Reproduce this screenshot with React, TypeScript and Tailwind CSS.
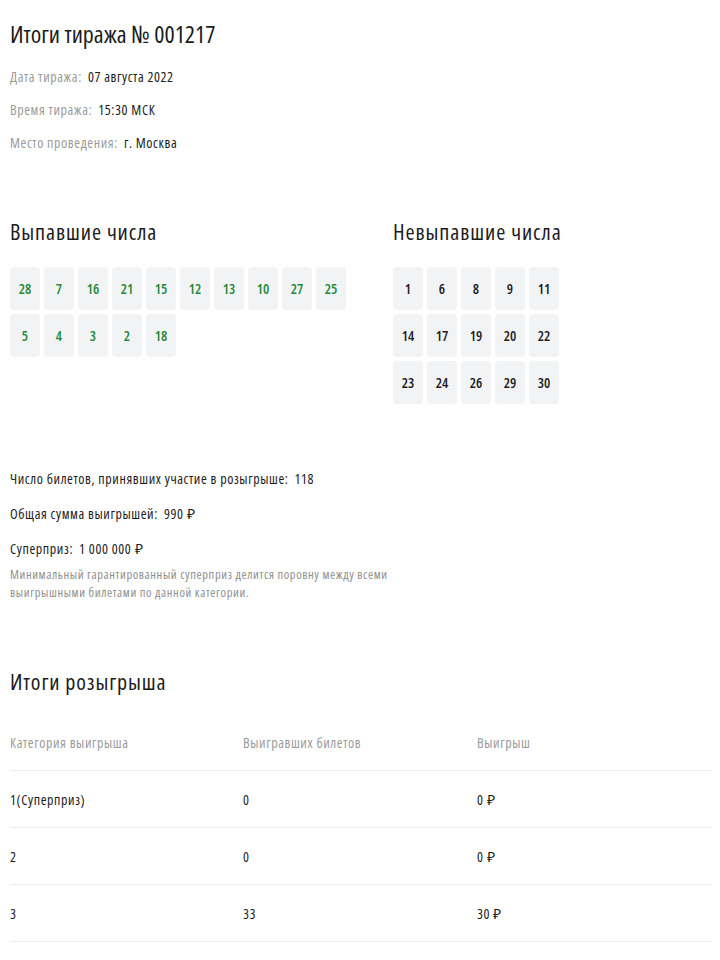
const drawn = [28, 7, 16, 21, 15, 12, 13, 10, 27, 25, 5, 4, 3, 2, 18];
const missed = [1, 6, 8, 9, 11, 14, 17, 19, 20, 22, 23, 24, 26, 29, 30];

const info = [
  { label: "Дата тиража:", value: "07 августа 2022" },
  { label: "Время тиража:", value: "15:30 МСК" },
  { label: "Место проведения:", value: "г. Москва" },
];

const rows = [
  { cat: "1(Суперприз)", count: "0", prize: "0 ₽" },
  { cat: "2", count: "0", prize: "0 ₽" },
  { cat: "3", count: "33", prize: "30 ₽" },
];

function Tile({ n, green }: { n: number; green?: boolean }) {
  return (
    <div
      className={`flex h-[43px] w-[30px] items-center justify-center rounded-[4px] bg-[#f2f3f5] text-[14px] font-semibold tracking-normal ${
        green ? "text-[#23893a]" : "text-[#1c1c1c]"
      }`}
    >
      {n}
    </div>
  );
}

export default function App() {
  return (
    <div className="min-h-screen bg-white pl-[10px] pr-[8px] font-['Open_Sans',sans-serif] text-[#1c1c1c] [font-stretch:75%]">
      <h1 className="pt-[18px] text-[24px] leading-[32px] font-normal">Итоги тиража № 001217</h1>

      <div className="mt-[17px] flex flex-col gap-[13px] text-[14px] leading-[20px] tracking-[0.6px]">
        {info.map((i) => (
          <div key={i.label}>
            <span className="text-[#9b9b9b]">{i.label}</span>
            <span className="ml-[6px]">{i.value}</span>
          </div>
        ))}
      </div>

      <div className="mt-[64px] flex">
        <div className="w-[383px]">
          <h2 className="text-[22px] leading-[28px] font-normal tracking-[0.9px]">Выпавшие числа</h2>
          <div className="mt-[22px] grid grid-cols-[repeat(10,30px)] gap-[4px]">
            {drawn.map((n) => (
              <Tile key={n} n={n} green />
            ))}
          </div>
        </div>
        <div>
          <h2 className="text-[22px] leading-[28px] font-normal tracking-[0.9px]">Невыпавшие числа</h2>
          <div className="mt-[22px] grid grid-cols-[repeat(5,30px)] gap-[4px]">
            {missed.map((n) => (
              <Tile key={n} n={n} />
            ))}
          </div>
        </div>
      </div>

      <div className="mt-[65px] flex flex-col gap-[15px] text-[14px] leading-[20px] tracking-[0.6px]">
        <div>
          Число билетов, принявших участие в розыгрыше:<span className="ml-[6px]">118</span>
        </div>
        <div>
          Общая сумма выигрышей:<span className="ml-[6px]">990 ₽</span>
        </div>
        <div>
          Суперприз:<span className="ml-[6px]">1 000 000 ₽</span>
        </div>
      </div>
      <p className="mt-[7px] w-[395px] text-[12.5px] leading-[18px] tracking-[0.6px] text-[#8f8f8f]">
        Минимальный гарантированный суперприз делится поровну между всеми выигрышными билетами по данной категории.
      </p>

      <h2 className="mt-[65px] text-[22px] leading-[28px] font-normal tracking-[0.9px]">Итоги розыгрыша</h2>

      <div className="mt-[19px] text-[14px] tracking-[0.6px]">
        <div className="grid h-[57px] grid-cols-[233px_234px_1fr] items-center border-b border-[#eceef2] text-[#9b9b9b]">
          <div>Категория выигрыша</div>
          <div>Выигравших билетов</div>
          <div>Выигрыш</div>
        </div>
        {rows.map((r) => (
          <div
            key={r.cat}
            className="grid h-[57px] grid-cols-[233px_234px_1fr] items-center border-b border-[#eceef2]"
          >
            <div>{r.cat}</div>
            <div>{r.count}</div>
            <div>{r.prize}</div>
          </div>
        ))}
      </div>
    </div>
  );
}
